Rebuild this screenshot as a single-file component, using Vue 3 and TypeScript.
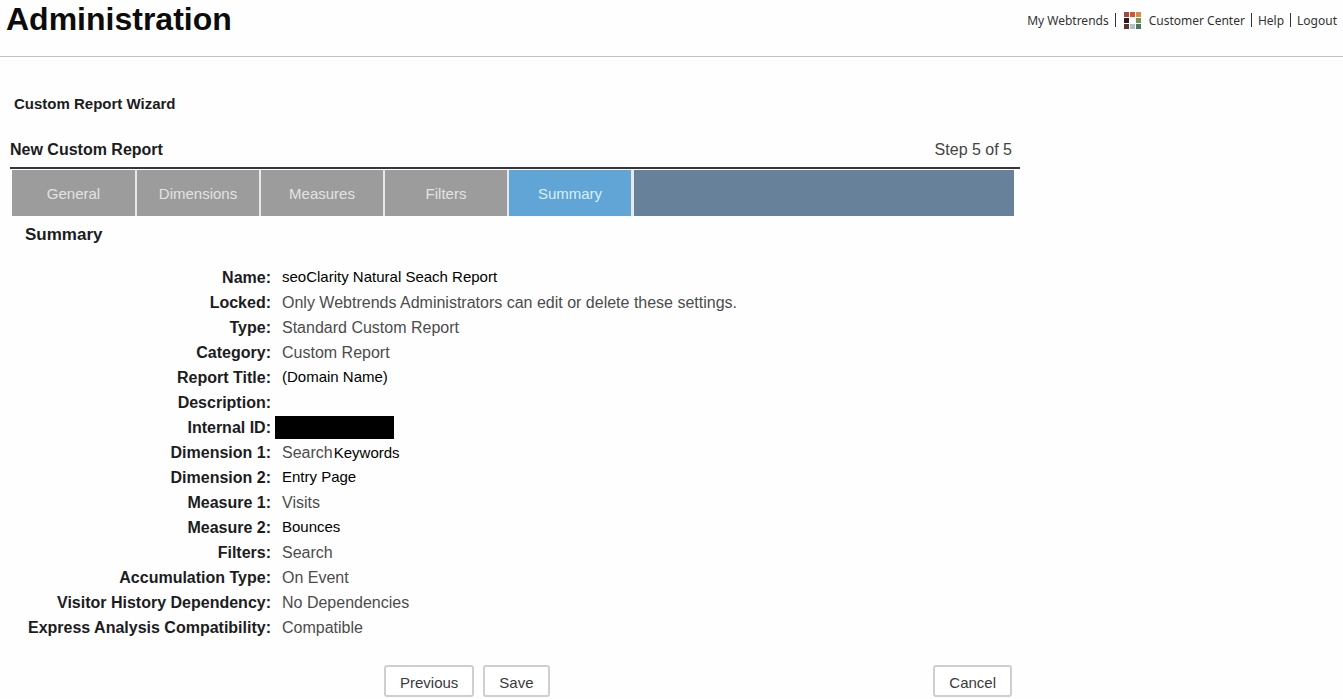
<script setup lang="ts">
import { ref } from 'vue'

interface SummaryRow {
  label: string
  value: string
  extra?: string
  entered?: boolean
  redacted?: boolean
}

const steps: string[] = ['General', 'Dimensions', 'Measures', 'Filters', 'Summary']
const current = ref('Summary')

const rows: SummaryRow[] = [
  { label: 'Name', value: 'seoClarity Natural Seach Report', entered: true },
  { label: 'Locked', value: 'Only Webtrends Administrators can edit or delete these settings.' },
  { label: 'Type', value: 'Standard Custom Report' },
  { label: 'Category', value: 'Custom Report' },
  { label: 'Report Title', value: '(Domain Name)', entered: true },
  { label: 'Description', value: '' },
  { label: 'Internal ID', value: '', redacted: true },
  { label: 'Dimension 1', value: 'Search', extra: 'Keywords' },
  { label: 'Dimension 2', value: 'Entry Page', entered: true },
  { label: 'Measure 1', value: 'Visits' },
  { label: 'Measure 2', value: 'Bounces', entered: true },
  { label: 'Filters', value: 'Search' },
  { label: 'Accumulation Type', value: 'On Event' },
  { label: 'Visitor History Dependency', value: 'No Dependencies' },
  { label: 'Express Analysis Compatibility', value: 'Compatible' },
]
</script>

<template>
  <div class="page">
    <header class="top">
      <h1>Administration</h1>
      <nav class="links" aria-label="Account">
        <a href="#">My Webtrends</a>
        <span class="bar"></span>
        <a href="#" class="center">
          <svg width="17" height="17" viewBox="0 0 17 17" aria-hidden="true">
            <rect x="0" y="0" width="5" height="5" fill="#a5473d" />
            <rect x="6" y="0" width="5" height="5" fill="#d9532f" />
            <rect x="12" y="0" width="5" height="5" fill="#d98a45" />
            <rect x="0" y="6" width="5" height="5" fill="#2b1d1c" />
            <rect x="12" y="6" width="5" height="5" fill="#6d9a4a" />
            <rect x="0" y="12" width="5" height="5" fill="#5c332d" />
            <rect x="6" y="12" width="5" height="5" fill="#b4c0c6" />
            <rect x="12" y="12" width="5" height="5" fill="#4c7569" />
          </svg>
          Customer Center
        </a>
        <span class="bar"></span>
        <a href="#">Help</a>
        <span class="bar"></span>
        <a href="#">Logout</a>
      </nav>
    </header>

    <main class="wizard">
      <h2 class="wizard-title">Custom Report Wizard</h2>
      <div class="report-head">
        <h2>New Custom Report</h2>
        <span class="step">Step 5 of 5</span>
      </div>
      <nav class="tabs" aria-label="Wizard steps">
        <button
          v-for="step in steps"
          :key="step"
          type="button"
          class="tab"
          :class="{ active: step === current }"
          @click="current = step"
        >
          {{ step }}
        </button>
      </nav>

      <h3>Summary</h3>
      <dl class="summary">
        <template v-for="row in rows" :key="row.label">
          <dt>{{ row.label }}:</dt>
          <dd :class="{ entered: row.entered }">
            <span v-if="row.redacted" class="redacted"></span>
            <template v-else>{{ row.value }}</template><span v-if="row.extra" class="extra">{{ row.extra }}</span>
          </dd>
        </template>
      </dl>

      <div class="actions">
        <button type="button" class="btn">Previous</button>
        <button type="button" class="btn">Save</button>
        <button type="button" class="btn cancel">Cancel</button>
      </div>
    </main>
  </div>
</template>

<style>
body {
  background: #fefefe;
}
</style>

<style scoped>
.page {
  font-family: "Liberation Sans", Arial, sans-serif;
  color: #1c1c1e;
}
.top {
  display: flex;
  justify-content: space-between;
  align-items: flex-start;
  height: 56px;
  padding: 0 6px;
  border-bottom: 1px solid #c4c0ba;
}
h1, h2, h3, dl, dd {
  margin: 0;
}
h1 {
  font-size: 32px;
  line-height: 38px;
  color: #0c0c0c;
}
.links {
  display: flex;
  align-items: center;
  gap: 6px;
  height: 40px;
  font-family: "Noto Sans", Tahoma, sans-serif;
  font-size: 12px;
}
.links a {
  color: #333;
  text-decoration: none;
}
.center {
  display: flex;
  align-items: center;
  gap: 8px;
  padding-left: 2px;
}
.bar {
  width: 1px;
  height: 14px;
  background: #333;
}
.wizard {
  max-width: 1010px;
  padding: 37px 10px 0;
}
h2 {
  font-size: 16px;
  line-height: 20px;
}
.wizard-title {
  padding-left: 4px;
  font-size: 15px;
}
.report-head {
  display: flex;
  justify-content: space-between;
  margin-top: 26px;
  padding: 0 8px 7px 0;
  border-bottom: 2px solid #35353d;
}
.step {
  font-size: 16px;
  line-height: 20px;
  color: #444;
}
.tabs {
  display: flex;
  gap: 2px;
  margin: 1px 6px 0 2px;
  height: 46px;
  background: linear-gradient(#68819b, #68819b) right / calc(100% - 622px) 100% no-repeat #e6eaee;
}
.tab {
  width: 122px;
  padding: 1px 0 0;
  border: 0;
  background: #9c9c9c;
  color: #e3e3e3;
  font: 15px "Liberation Sans", Arial, sans-serif;
}
.tab:first-child {
  width: 123px;
}
.tab.active {
  background: #61a5d6;
  color: #d8effc;
}
h3 {
  margin-top: 8px;
  padding-left: 15px;
  font-size: 17px;
  line-height: 22px;
}
.summary {
  display: grid;
  grid-template-columns: 261px 1fr;
  grid-auto-rows: 25px;
  column-gap: 11px;
  margin-top: 19px;
  font-size: 16px;
  line-height: 25px;
}
dt {
  font-weight: bold;
  text-align: right;
  white-space: nowrap;
}
dd {
  color: #4c4c4c;
}
.entered, .extra {
  font-size: 15px;
  line-height: 23px;
  color: #000;
}
.extra {
  margin-left: 1px;
}
.redacted {
  display: block;
  width: 119px;
  height: 23px;
  margin: 1px 0 0 -7px;
  background: #000;
}
.actions {
  display: flex;
  gap: 9px;
  margin-top: 25px;
  padding: 0 8px 0 374px;
}
.btn {
  height: 32px;
  padding: 2px 14px 0;
  border: 2px solid #cfcfd2;
  border-radius: 3px;
  background: #fff;
  color: #3a3a3a;
  font: 15px "Liberation Sans", Arial, sans-serif;
}
.cancel {
  margin-left: auto;
}
</style>
